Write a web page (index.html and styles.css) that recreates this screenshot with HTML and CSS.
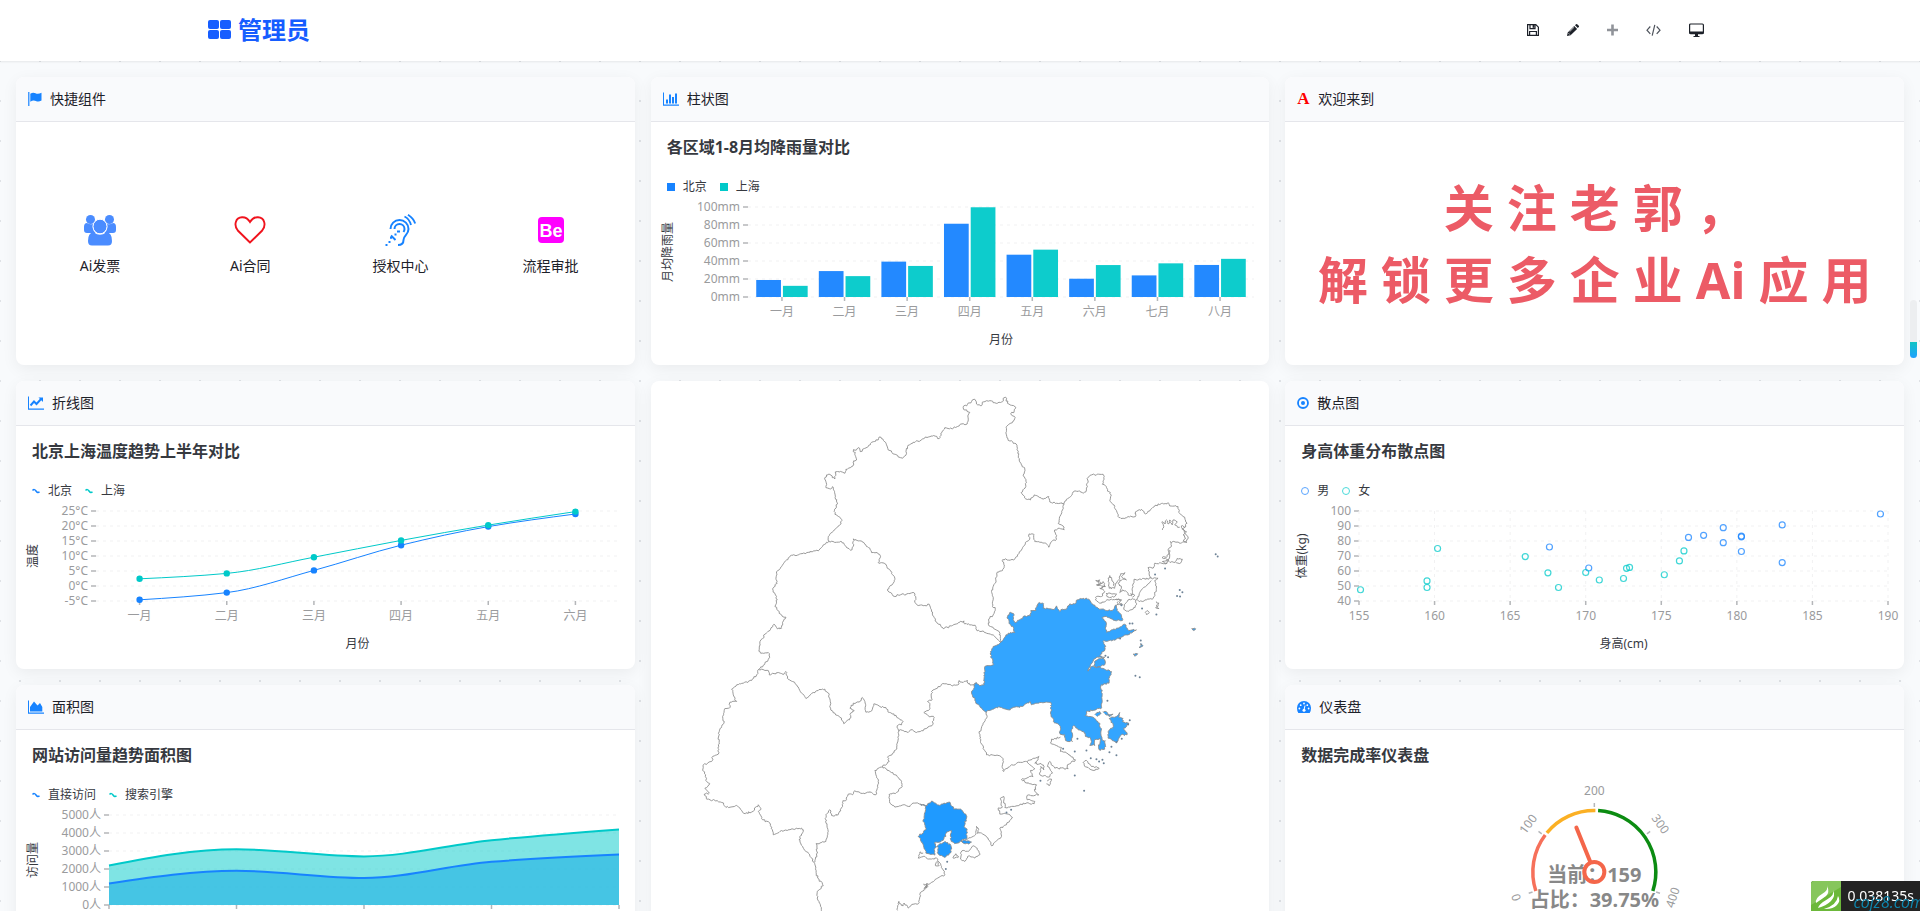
FILE: index.html
```html
<!DOCTYPE html>
<html lang="zh-CN">
<head>
<meta charset="utf-8">
<title>管理员</title>
<link rel="stylesheet" href="styles.css">
</head>
<body>
<header class="topbar">
  <a class="brand" href="#">
    <svg class="brand-icon" viewBox="0 0 24 20" aria-hidden="true"><rect x="0" y="0" width="11" height="9" rx="2"/><rect x="12" y="0" width="11" height="9" rx="2"/><rect x="0" y="10" width="11" height="9" rx="2"/><rect x="12" y="10" width="11" height="9" rx="2"/></svg>
    <span>管理员</span>
  </a>
  <nav class="tools">
    <button class="tool" aria-label="保存"><svg width="12" height="14" viewBox="0 0 12 14"><path d="M.6 1.6h8.2l2.6 2.6v8.2H.6zM3 1.6v4h5v-4M2.6 12.4V8.5h6.8v3.9" fill="none" stroke="#1d2129" stroke-width="1.2"/><rect x="5.6" y="2" width="1.8" height="2.8" fill="#1d2129"/></svg></button>
    <button class="tool" aria-label="编辑"><svg width="12" height="14" viewBox="0 0 12 14"><path d="M0 13l.7-3.6L7.2 3l2.9 2.9-6.500 6.400zM8 2.200l1-1q.6-.5 1.200 0l1.600 1.600q.5.600 0 1.200l-1 1z" fill="#1d2129"/><path d="M1.500 10.200l1.400 1.400M2.600 8.700l4.400-4.400" stroke="#fff" stroke-width=".7"/></svg></button>
    <button class="tool" aria-label="新增"><svg width="11" height="14" viewBox="0 0 11 14"><path d="M5.500 1.500v11M0 7h11" stroke="#909399" stroke-width="2.600"/></svg></button>
    <button class="tool" aria-label="代码"><svg width="15" height="14" viewBox="0 0 15 14"><path d="M4.300 3.500L1 7.200l3.300 3.700M10.700 3.500L14 7.200l-3.300 3.700M8.800 1.800L6.200 12.600" fill="none" stroke="#4e535c" stroke-width="1.200"/></svg></button>
    <button class="tool" aria-label="预览"><svg width="15" height="14" viewBox="0 0 15 14"><rect x=".6" y="1" width="13.800" height="9.600" rx="1" fill="none" stroke="#1d2129" stroke-width="1.200"/><path d="M.6 8.500h13.800v2.500H.6zM6 11h3v2h1.500v1h-6v-1H6z" fill="#1d2129"/></svg></button>
  </nav>
</header>

<main class="board">
  <section class="card">
    <h2 class="card-head"><svg width="14" height="16" viewBox="0 0 14 16"><path d="M.8 1v14" stroke="#1783ff" stroke-width="1.200"/><path d="M2.300 2.800q2.700-1.800 5.200-.5t6-.5v7.700q-3 1.800-5.600.5t-5.600.7z" fill="#1783ff"/></svg>快捷组件</h2>
    <div class="shortcuts">
      <a class="shortcut" href="#"><svg width="34" height="32" viewBox="0 0 34 32" fill="#4a8cff"><circle cx="7.500" cy="5.500" r="4.500"/><circle cx="26.500" cy="5.500" r="4.500"/><path d="M1 13q0-4 3-4 3 2 6 1-1 6 2.500 9H4q-3 0-3-3zM33 13q0-4-3-4-3 2-6 1 1 6-2.500 9H30q3 0 3-3z"/><ellipse cx="17" cy="12.500" rx="7" ry="7.300" stroke="#fff"/><path d="M5 27q0-9 6-8.500 6 4.500 12 0 6-.5 6 8.500 0 4.500-4 4.500H9q-4 0-4-4.500z"/></svg>Ai发票</a>
      <a class="shortcut" href="#"><svg width="32" height="32" viewBox="0 0 32 32"><path d="M16 28.500L3.800 16.500C-.5 11 1.500 3.500 8 3.200 12 3 14.500 5.500 16 8c1.500-2.500 4-5 8-4.800 6.500.3 8.500 7.800 4.200 13.300z" fill="none" stroke="#f0141e" stroke-width="1.900"/></svg>Ai合同</a>
      <a class="shortcut" href="#"><svg width="32" height="32" viewBox="0 0 32 32" fill="none" stroke="#1783ff" stroke-width="2"><path d="M6.500 15a9 9 0 0 1 18 0c0 6-5 6-5 11 0 3-2 5-5.500 5"/><path d="M10.500 15a5 5 0 0 1 10 0q0 1.500-1 3"/><path d="M20.500 2.500q5 2.500 6.500 8.500M24 .8q5.500 3.500 7.200 8.700" stroke-width="1.900"/><path d="M1.500 31h2M4.500 28h2M7 21.500l4.500 4.500M6 23.800h2M10.500 20.500h2M13 17.500h3" stroke-width="1.900"/></svg>授权中心</a>
      <a class="shortcut" href="#"><svg width="32" height="32" viewBox="0 0 32 32"><rect x="3" y="3" width="26" height="26" rx="4" fill="#f0f"/><text class="be" x="16" y="23" text-anchor="middle">Be</text></svg>流程审批</a>
    </div>
  </section>

  <section class="card">
    <h2 class="card-head"><svg width="16" height="16" viewBox="0 0 16 16" fill="#1783ff"><path d="M0 1.500h1V13.500h15v1.200H0zM3 8.500h2V12.500H3zM6 3.500h2v9H6zM9 6h2v6.500H9zM12 2.500h2v10h-2z"/></svg>柱状图</h2>
    <div class="chart-body">
      <h3 class="chart-title">各区域1-8月均降雨量对比</h3>
      <ul class="legend"><li><svg width="8" height="8"><rect width="8" height="8" fill="#1783ff"/></svg>北京</li><li><svg width="8" height="8"><rect width="8" height="8" fill="#00c9c9"/></svg>上海</li></ul>
      <svg class="plot" id="bar"></svg>
    </div>
  </section>

  <section class="card">
    <h2 class="card-head"><span class="letter-icon" aria-hidden="true">A</span>欢迎来到</h2>
    <div class="welcome"><p>关 注 老 郭 ，<br>解 锁 更 多 企 业 Ai 应 用</p></div>
  </section>

  <section class="card">
    <h2 class="card-head"><svg width="16" height="16" viewBox="0 0 16 16"><path d="M0 1.500h1v12h15v1.200H0z" fill="#1783ff"/><path d="M2.500 10.500l3.500-4 2.500 2.500 5-5.500" fill="none" stroke="#1783ff" stroke-width="1.900"/><path d="M10.500 2.500H15V7z" fill="#1783ff"/></svg>折线图</h2>
    <div class="chart-body">
      <h3 class="chart-title">北京上海温度趋势上半年对比</h3>
      <ul class="legend"><li><svg width="8" height="8"><path d="M.5 3.500Q2.300 1.500 4 4t3.500.8" fill="none" stroke="#1783ff" stroke-width="1.500"/></svg>北京</li><li><svg width="8" height="8"><path d="M.5 3.500Q2.300 1.500 4 4t3.500.8" fill="none" stroke="#00c9c9" stroke-width="1.500"/></svg>上海</li></ul>
      <svg class="plot" id="line"></svg>
    </div>
  </section>

  <section class="card card-tall">
    <svg class="map" id="map" viewBox="0 0 619 592" preserveAspectRatio="xMidYMin meet" role="img" aria-label="地图"></svg>
  </section>

  <section class="card">
    <h2 class="card-head"><svg width="12" height="16" viewBox="0 0 12 16"><circle cx="6" cy="8" r="5" fill="none" stroke="#1783ff" stroke-width="1.800"/><circle cx="6" cy="8" r="2" fill="#1783ff"/></svg>散点图</h2>
    <div class="chart-body">
      <h3 class="chart-title">身高体重分布散点图</h3>
      <ul class="legend"><li><svg width="8" height="8"><circle cx="4" cy="4" r="3.500" fill="none" stroke="#5aa5ff"/></svg>男</li><li><svg width="8" height="8"><circle cx="4" cy="4" r="3.500" fill="none" stroke="#4cdada"/></svg>女</li></ul>
      <svg class="plot" id="scatter"></svg>
    </div>
  </section>

  <section class="card">
    <h2 class="card-head"><svg width="16" height="16" viewBox="0 0 16 16" fill="#1783ff"><path d="M0 1.500h1v12h15v1.200H0zM2 12.500V8l4-5.500 3.500 4L12 4l2.300 4v4.500z"/></svg>面积图</h2>
    <div class="chart-body">
      <h3 class="chart-title">网站访问量趋势面积图</h3>
      <ul class="legend"><li><svg width="8" height="8"><path d="M.5 3.500Q2.300 1.500 4 4t3.500.8" fill="none" stroke="#1783ff" stroke-width="1.500"/></svg>直接访问</li><li><svg width="8" height="8"><path d="M.5 3.500Q2.300 1.500 4 4t3.500.8" fill="none" stroke="#00c9c9" stroke-width="1.500"/></svg>搜索引擎</li></ul>
      <svg class="plot" id="area"></svg>
    </div>
  </section>

  <section class="card">
    <h2 class="card-head"><svg width="14" height="16" viewBox="0 0 14 16"><path d="M7 2a7 7 0 0 1 7 7.200q0 2.600-1.300 4.800H1.300Q0 11.800 0 9.200A7 7 0 0 1 7 2z" fill="#1783ff"/><g fill="#fff"><circle cx="2.400" cy="9.500" r=".9"/><circle cx="3.700" cy="6.200" r=".9"/><circle cx="7" cy="4.500" r=".9"/><circle cx="10.300" cy="6.200" r=".9"/><circle cx="11.600" cy="9.500" r=".9"/><circle cx="7" cy="11.300" r="1.500"/></g><path d="M7 11l1-4.500" stroke="#fff"/></svg>仪表盘</h2>
    <div class="chart-body">
      <h3 class="chart-title">数据完成率仪表盘</h3>
      <svg class="gauge" id="gauge" viewBox="-100 -105 200 204"></svg>
    </div>
  </section>
</main>

<div class="progress" aria-hidden="true"><div class="progress-fill"></div></div>
<div class="trace">
  <svg class="trace-logo" viewBox="0 0 30 30" aria-hidden="true"><rect width="30" height="30" fill="#6cb83a"/><path d="M0 0h30v6L0 24z" fill="#86c65c"/><g fill="#fff"><path d="M16 4q2 5-5 9T5 22q6-4 10-7t1-11z"/><path d="M22 9q2 5-6 9.500T7 27q8-2 13-7t2-11z"/><path d="M27 15q-1 9-14 13 9 .5 13-4t1-9z"/></g></svg>
  <span class="trace-time">0.038135s</span>
  <span class="watermark">cojz8.com</span>
</div>
<script src="charts.js"></script>
</body>
</html>
```
FILE: styles.css
```css
* { box-sizing: border-box; }

body {
  margin: 0;
  height: 100vh;
  overflow: hidden;
  display: flex;
  flex-direction: column;
  font: 14px/20px "Noto Sans", "Noto Sans CJK SC", sans-serif;
  color: #1d2129;
  background: #f8fafc;
}

h2, h3, p, ul { margin: 0; padding: 0; font: inherit; }
a { color: inherit; text-decoration: none; }

.topbar {
  flex: none;
  height: 61px;
  padding: 0 216px 2px 208px;
  display: flex;
  align-items: center;
  justify-content: space-between;
  background: #fff;
  box-shadow: 0 1px 2px rgba(0, 0, 0, 0.08);
  position: relative;
}
.brand {
  display: flex;
  align-items: center;
  gap: 6px;
  font-size: 24px;
  line-height: 32px;
  font-weight: 700;
  color: #165dff;
}
.brand-icon { width: 24px; height: 20px; fill: #165dff; }
.tools { display: flex; align-items: center; gap: 28px; }
.tool { display: flex; padding: 0; border: 0; background: none; cursor: pointer; }

.board {
  flex: 1;
  min-height: 0;
  overflow: auto;
  scrollbar-width: none;
  padding: 16px;
  display: grid;
  grid-template-columns: repeat(3, minmax(0, 1fr));
  grid-auto-rows: 288px;
  gap: 16px;
  background-color: #f8fafc;
  background-image:
    radial-gradient(circle, #dfe2e6 1px, transparent 1px),
    radial-gradient(circle, #dfe2e6 1px, transparent 1px);
  background-size: 40px 40px;
  background-position: -20px -20px, 0 0;
}

.card {
  display: flex;
  flex-direction: column;
  background: #fff;
  border-radius: 8px;
  box-shadow: 0 4px 16px rgba(0, 0, 0, 0.06);
  overflow: hidden;
}
.card-tall { grid-row: span 2; }
.card-head {
  flex: none;
  height: 45px;
  padding: 0 12px;
  display: flex;
  align-items: center;
  gap: 8px;
  background: #f9fafc;
  border-bottom: 1px solid #e5e6eb;
}
.letter-icon {
  width: 13px;
  font: 700 17px/20px "Liberation Serif", serif;
  color: #f00;
}

.shortcuts {
  flex: 1;
  padding: 2px 9px 0;
  display: grid;
  grid-template-columns: repeat(4, 1fr);
  align-items: center;
}
.shortcut {
  display: flex;
  flex-direction: column;
  align-items: center;
  gap: 10px;
}
.be { font: 700 18px "Liberation Sans", sans-serif; fill: #fff; }

.welcome {
  flex: 1;
  display: flex;
  align-items: center;
  justify-content: center;
  text-align: center;
  white-space: nowrap;
  font-size: 50px;
  line-height: 72px;
  font-weight: 700;
  color: #ec5b66;
}

.chart-body { flex: 1; display: flex; flex-direction: column; padding-top: 13px; }
.chart-title {
  padding: 0 16px;
  font-size: 16px;
  line-height: 24px;
  font-weight: 700;
  color: #36393f;
}
.legend {
  list-style: none;
  padding: 18px 16px 0;
  display: flex;
  gap: 13px;
  font-size: 12px;
  line-height: 20px;
  color: #36393f;
}
.legend li { display: flex; align-items: center; gap: 8px; }
.plot { display: block; width: 100%; height: 168px; }
.gauge { display: block; width: 100%; height: 204px; }
.map { display: block; width: 100%; height: 100%; }

.tick-label { font-size: 12px; fill: #9a9b9d; }
.axis-title { font-size: 12px; fill: #36393f; }
.gauge-text { font-size: 20px; font-weight: 700; fill: #888; }

.progress {
  position: fixed;
  right: 3px;
  top: 300px;
  width: 7px;
  height: 58px;
  border-radius: 4px;
  background: #eceef0;
  display: flex;
  align-items: flex-end;
  overflow: hidden;
}
.progress-fill {
  width: 100%;
  height: 28%;
  background: linear-gradient(#10c4c4, #1ea0ff);
}

.trace {
  position: fixed;
  right: 0;
  bottom: 0;
  height: 30px;
  display: flex;
  background: #232323;
  color: #fff;
  border-top-left-radius: 3px;
  overflow: hidden;
}
.trace-logo { width: 30px; height: 30px; }
.trace-time { padding: 0 6px; line-height: 30px; }
.watermark {
  position: absolute;
  right: -4px;
  bottom: -1px;
  font: italic 16px/20px "Open Sans", sans-serif;
  color: #0e86ae;
}
```
FILE: charts.js
```js
const BLUE = '#1783ff', TEAL = '#00c9c9';

const line = (x1, y1, x2, y2, s) => `<line x1="${x1}" y1="${y1}" x2="${x2}" y2="${y2}" ${s}/>`;
const text = (x, y, t, anchor, cls = 'tick-label', extra = '') =>
  `<text x="${x}" y="${y}" text-anchor="${anchor}" dominant-baseline="central" class="${cls}" ${extra}>${t}</text>`;
const TICK = 'stroke="#b4b6b9" stroke-width="1.5"';
const GRID = 'stroke="#f1f1f2" stroke-dasharray="3 4"';
const TOP = 10, BOTTOM = 100, LABEL = 114;

function frame(W, left, ticks, yTitle, xTitle) {
  const right = W - 16;
  let s = '';
  ticks.forEach((t, i) => {
    const y = BOTTOM - (BOTTOM - TOP) * i / (ticks.length - 1);
    s += line(left, y, right, y, GRID) + line(left - 5, y, left, y, TICK) + text(left - 8, y - 1, t, 'end');
  });
  s += text((left + right) / 2, 142, xTitle, 'middle', 'axis-title');
  s += text(0, 0, yTitle, 'middle', 'axis-title', 'transform="translate(16 55) rotate(-90)"');
  return s;
}

// Monotone cubic interpolation through the points.
function smooth(p) {
  const n = p.length, d = [], m = [];
  for (let i = 0; i < n - 1; i++) d.push((p[i + 1][1] - p[i][1]) / (p[i + 1][0] - p[i][0]));
  for (let i = 1; i < n - 1; i++) m[i] = d[i - 1] * d[i] <= 0 ? 0 : 2 * d[i - 1] * d[i] / (d[i - 1] + d[i]);
  m[0] = (3 * d[0] - m[1]) / 2;
  m[n - 1] = (3 * d[n - 2] - m[n - 2]) / 2;
  let s = `M${p[0]}`;
  for (let i = 0; i < n - 1; i++) {
    const h = (p[i + 1][0] - p[i][0]) / 3;
    s += `C${p[i][0] + h},${p[i][1] + m[i] * h} ${p[i + 1][0] - h},${p[i + 1][1] - m[i + 1] * h} ${p[i + 1]}`;
  }
  return s;
}

const months = ['一月', '二月', '三月', '四月', '五月', '六月', '七月', '八月'];

function drawBar(el) {
  const W = el.clientWidth, left = 97, right = W - 16;
  const a = [18.9, 28.8, 39.3, 81.4, 47, 20.3, 24, 35.6];
  const b = [12.4, 23.2, 34.5, 99.7, 52.6, 35.5, 37.4, 42.4];
  let s = frame(W, left, ['0mm', '20mm', '40mm', '60mm', '80mm', '100mm'], '月均降雨量', '月份');
  const step = (right - left) / 8.085, x0 = (left + right) / 2 - step * 3.5, bw = step * 0.395;
  months.forEach((m, i) => {
    const x = x0 + step * i;
    s += line(x, BOTTOM, x, BOTTOM + 4, TICK) + text(x, LABEL, m, 'middle');
    s += `<rect x="${x - 1 - bw}" y="${BOTTOM - a[i] * 0.9}" width="${bw}" height="${a[i] * 0.9}" fill="${BLUE}" opacity=".95"/>`;
    s += `<rect x="${x + 1}" y="${BOTTOM - b[i] * 0.9}" width="${bw}" height="${b[i] * 0.9}" fill="${TEAL}" opacity=".95"/>`;
  });
  el.innerHTML = s;
}

function drawLine(el) {
  const W = el.clientWidth, left = 80, right = W - 16, step = (right - left) / 6;
  let s = frame(W, left, ['-5°C', '0°C', '5°C', '10°C', '15°C', '20°C', '25°C'], '温度', '月份');
  const series = [[BLUE, [-4.6, -2.2, 5.2, 13.6, 19.8, 24]], [TEAL, [2.4, 4.2, 9.6, 15.2, 20.3, 24.8]]];
  for (let i = 0; i < 6; i++) {
    const x = left + step * (i + 0.5);
    s += line(x, BOTTOM, x, BOTTOM + 4, TICK) + text(x, LABEL, months[i], 'middle');
  }
  series.forEach(([c, v]) => {
    const p = v.map((t, i) => [left + step * (i + 0.5), BOTTOM - (t + 5) * 3]);
    s += `<path d="${smooth(p)}" fill="none" stroke="${c}"/>`;
    p.forEach(q => { s += `<circle cx="${q[0]}" cy="${q[1]}" r="3.2" fill="${c}"/>`; });
  });
  el.innerHTML = s;
}

function drawScatter(el) {
  const W = el.clientWidth, left = 74, right = W - 16;
  let s = frame(W, left, [40, 50, 60, 70, 80, 90, 100], '体重(kg)', '身高(cm)');
  const X = v => left + (v - 155) * (right - left) / 35;
  for (let v = 155; v <= 190; v += 5) {
    s += line(X(v), TOP, X(v), BOTTOM, GRID) + line(X(v), BOTTOM, X(v), BOTTOM + 4, TICK) + text(X(v), LABEL, v, 'middle');
  }
  const men = [[167.6, 76], [170.2, 62], [176.8, 82.4], [177.8, 83.8], [179.1, 88.9], [179.1, 78.9], [180.3, 83.2], [180.3, 82.8], [180.3, 73], [183, 90.7], [183, 65.6], [189.5, 98]];
  const women = [[155.1, 47.5], [159.5, 53.4], [159.5, 49], [160.2, 75], [166, 69.6], [167.5, 58.8], [168.2, 49], [170, 59], [170.9, 54], [172.5, 55], [172.7, 61.8], [172.9, 62.4], [175.2, 57.5], [176.2, 66.7], [176.5, 73.4]];
  [[BLUE, men], [TEAL, women]].forEach(([c, pts]) => pts.forEach(p => {
    s += `<circle cx="${X(p[0])}" cy="${BOTTOM - (p[1] - 40) * 1.5}" r="3" fill="none" stroke="${c}" stroke-width="1.200" opacity=".75"/>`;
  }));
  el.innerHTML = s;
}

function drawArea(el) {
  const W = el.clientWidth, left = 93, right = W - 16, step = (right - left) / 4;
  let s = frame(W, left, ['0人', '1000人', '2000人', '3000人', '4000人', '5000人'], '访问量', '月份');
  const series = [[BLUE, [1200, 1900, 1500, 2400, 2800]], [TEAL, [2200, 3100, 2700, 3600, 4200]]];
  const paths = series.map(([c, v]) => [c, smooth(v.map((t, i) => [left + step * i, BOTTOM - t * 0.018]))]);
  paths.forEach(([c, d]) => { s += `<path d="${d}V${BOTTOM}H${left}Z" fill="${c}" opacity=".5"/>`; });
  paths.forEach(([c, d]) => { s += `<path d="${d}" fill="none" stroke="${c}" stroke-width="2"/>`; });
  for (let i = 0; i < 5; i++) {
    const x = left + step * i;
    s += line(x, BOTTOM, x, BOTTOM + 4, TICK) + text(x, LABEL + 1, months[i], 'middle');
  }
  el.innerHTML = s;
}

function drawGauge(el) {
  const P = (r, a) => [r * Math.cos(a * Math.PI / 180), -r * Math.sin(a * Math.PI / 180)];
  const arc = (a, b, c) => `<path d="M${P(61.500, a)}A61.500,61.500 0 0 1 ${P(61.500, b)}" fill="none" stroke="${c}" stroke-width="3.500"/>`;
  let s = arc(198, 143, '#f6705a') + arc(140.500, 89, '#fbb024') + arc(86.500, -18, '#0c8c12');
  [0, 100, 200, 300, 400].forEach((v, i) => {
    const a = 198 - 54 * i, [x, y] = P(82, a);
    const rot = [72, -54, 0, 54, -72][i];
    s += line(...P(65, a), ...P(69, a), TICK);
    s += text(0, 0, v, 'middle', 'tick-label', `transform="translate(${x} ${y}) rotate(${rot})"`);
  });
  s += text(0, 2, '当前：159', 'middle', 'gauge-text') + text(0, 27, '占比：39.75%', 'middle', 'gauge-text');
  s += line(...P(11, 112), ...P(48, 112), 'stroke="#f4664a" stroke-width="4" stroke-linecap="round"');
  s += '<circle r="10" fill="none" stroke="#f4664a" stroke-width="4"/>';
  el.innerHTML = s;
}

// Outlines on four overlapping sheets: [sheet, fill, points]; each sheet has its own origin, three units to a pixel.
const SHEETS = { A: [-11, -11], B: [289, -11], C: [39, 259], D: [289, 199] };
const MAIN = '#33a5ff', SOUTH = '#1f9aff';
const REGIONS = [
  ['A', '', '568,514 565,500 572,490 583,480 597,468 606,452 598,440 585,433 584,418 593,402 587,388 584,365 578,350 572,357 558,353 558,335 554,327 560,315 570,313 577,323 585,327 586,306 600,306 615,310 618,298 632,293 642,282 642,272 650,270 646,247 640,245 642,238 650,240 655,233 661,245 668,238 685,230 695,217 707,214 718,201 725,206 737,217 745,240 765,253 788,265 800,250 803,230 820,217 845,210 855,204 870,200 888,199 898,206 903,190 910,182 915,173 940,175 960,164 982,162 985,135 990,127 975,120 970,113 983,103 995,95 1005,88 1010,102 1025,107 1028,96 1050,92 1060,98 1072,100 1088,95 1090,85 1098,82 1103,100 1115,106 1128,112 1122,128 1113,131 1126,142 1120,153 1108,162 1099,172 1101,200 1110,213 1125,220 1133,235 1138,270 1147,290 1155,297 1150,315 1158,328 1158,350 1144,368 1158,387 1172,390 1183,375 1200,383 1212,387 1227,380 1230,396 1250,400 1273,402'],
  ['B', '', '373,402 380,388 395,377 400,366 418,362 430,370 440,360 445,322 455,315 490,313 492,323 488,343 500,350 503,360 512,368 512,395 525,410 535,440 550,445 565,440 587,440 588,425 605,418 618,432 640,412 655,402 672,402 685,398 690,408 715,410 720,430 730,440 742,460 738,470 725,468 735,490 745,500 740,515 722,520 692,515 695,525 685,540 690,555 682,580 645,580 640,595 625,593 628,612 635,625 590,630 583,628 580,650 575,678 565,675 560,665 548,660 540,668 545,655 535,640 548,628 560,630 545,620 555,608 542,612 540,625 530,640 525,655 508,655 505,635 510,617 520,635 522,648'],
  ['B', '', '720,472 705,465 712,455 700,450 697,465 690,450 685,462 680,450 676,462 668,455 672,470 668,480'],
  ['B', '', '738,470 728,478 740,485 730,495 738,505 730,512 742,518'],
  ['B', '', '682,580 668,575 685,570 667,563 682,560 690,540'],
  ['B', '', '690,575 705,578 712,566 728,568 722,580 708,578'],
  ['B', '', '500,670 530,672 525,680 510,683 500,678 500,670'],
  ['B', '', '545,690 530,688 505,690 480,700 467,690 470,680 485,680 495,665 480,655 495,650 470,645 485,640 468,632 480,630 474,648 490,635 497,650 485,655'],
  ['B', '', '555,720 553,705 565,690 585,688 590,700 580,718 565,725 555,720'],
  ['B', '', '635,625 655,625 645,632 650,655 645,672 640,685 620,690 600,695 590,690 605,660 635,632'],
  ['B', '', '530,688 545,690 538,698 548,705 532,704 536,694'],
  ['B', '', '650,695 658,700 652,712 658,716 648,714 652,704'],
  ['B', '', '617,728 622,722 629,728 620,734 617,728'],
  ['B', '', '573,670 585,676 578,682'],
  ['B', '', '373,402 368,420 360,440 355,460 370,468 373,480 355,475 345,480 350,508 335,515 327,532 318,520 300,517 285,515 283,495 268,492 268,510 250,530 238,550 222,570 205,570 190,568 188,575 193,590 188,602 172,607 168,630 160,650 155,665 160,690 158,710 166,713 160,735 150,745 146,765 165,778 178,785 182,800 185,820'],
  ['A', '', '568,514 590,517 605,515 615,527 632,541 640,530 640,507 655,513 672,518 680,530 690,535 695,548 712,548 722,560 715,578 735,582 750,600 765,625 760,640 743,658 765,680 775,675 800,672 822,668 828,685 825,698 835,707 855,707 868,703 875,725 882,740 892,760 912,777 935,768 960,757 972,753 975,762 995,765 1008,770 1012,783 1030,783 1040,790 1060,795 1070,805 1085,820'],
  ['A', '', '568,514 550,525 535,543 520,543 500,548 475,555 455,556 440,570 425,590 410,605 408,625 412,640 398,657 405,672 412,690 405,710 418,725 425,735 438,742 428,760 425,775 412,777 402,763 392,778 375,793 360,815 358,838'],
  ['C', '', '208,28 212,40 235,38 240,52 225,70 207,88 200,105 185,122 160,130 140,135 125,148 130,165 140,185 120,187 118,205 103,210 98,230 103,245 88,275 85,315 85,343 68,350 65,365 40,375 38,392 47,405 50,425 60,432 45,445 58,460 43,463 50,478 75,482 95,488 108,503 140,497 150,505 160,520 185,517 205,495 213,507 205,515 218,540 240,550 250,585 270,575 300,570 335,565 340,575 327,600 340,625 355,640 372,667 378,685 383,715 400,738 382,755 382,775 392,800 394,830'],
  ['C', '', '207,88 235,92 238,105 265,98 282,103 288,95 292,115 320,135 335,160 348,176 370,158 385,152 405,148 418,165 422,205 435,220 455,235 462,252 480,235 482,220 493,213 480,205 490,190 508,187 517,173 525,185 528,217 542,215 552,192 570,200 588,203 595,217 612,222 625,235 638,243 635,255 622,258 625,270'],
  ['C', '', '625,270 640,272 655,278 662,270 680,278 712,265 728,255 733,233 715,228 702,218 718,210 720,195 713,185 727,178 725,155 745,140 765,132 785,137 808,132 808,122 820,128 833,122 835,132 850,135 860,128'],
  ['C', '', '628,272 622,310 618,330 600,347 593,352 598,365 578,380 555,392 560,410 565,425 558,465 545,458 520,460 492,455 488,465 475,463 470,480 460,482 458,500 445,525 425,527 420,510 408,525 407,545 415,575 408,605 378,612 383,640 375,667'],
  ['C', '', '578,380 600,395 615,405 632,420 637,440 620,458 597,465 600,490 615,502 640,495 655,500 675,490 692,493'],
  ['C', SOUTH, '692,493 708,500 700,540 708,570 685,590 700,615 708,640 735,646 733,630 740,622 733,610 755,603 768,590 770,577 785,573 783,600 795,612 815,605 818,598 828,600 832,570 823,560 830,528 812,508 792,508 780,487 762,490 750,497 735,490 725,484 718,490 712,497 692,493'],
  ['C', SOUTH, '743,618 765,605 783,617 784,635 765,653 745,643 743,618'],
  ['C', SOUTH, '815,602 835,603 845,607 835,613 820,610 815,602'],
  ['C', '', '700,640 690,637 685,655 700,650 715,658 740,655 755,680 765,705 740,717 710,738 690,765 688,788 660,800 655,805 643,790 640,798 627,785 623,812'],
  ['C', '', '737,678 742,665 748,678 737,678'],
  ['C', '', '702,732 715,740 704,745 712,730 706,748'],
  ['C', '', '812,640 820,632 835,635 850,618 862,625 870,645 855,655 838,648 825,665 812,658 815,645 812,640'],
  ['C', '', '790,655 798,642 806,652 790,655'],
  ['D', '', '80,780 107,765 110,740 115,745 112,760 125,760 145,775 155,798 185,770 180,745 200,735 218,713 205,703 180,703 175,685 187,683 185,665 182,655 192,650 195,683 235,678 250,670 283,672 285,665 262,660 262,647 297,645 285,635 290,615 270,612 245,600 280,590 272,572 285,567 262,547'],
  ['D', '', '140,397 142,410 130,430 118,460 122,485 140,525 180,528 190,537 187,560 192,575 215,555 260,545 280,535 298,530 295,540 285,550 310,555 312,570 303,560 300,585 325,592 338,580 323,560 330,545 345,565 385,567 383,555 407,540 385,522 362,515 365,503 332,490 335,478 362,472'],
  ['D', MAIN, '137,397 165,385 180,382 205,390 225,382 248,380 270,365 275,375 300,368 333,368 335,380 332,400 345,430 358,435 362,445 360,460 375,465 378,483 398,485 395,450 402,437 415,450 432,455 437,470 450,472 455,485 450,497 465,497 465,480 480,475 478,510 495,508 497,483 487,478 480,430 460,412 437,407 440,395 470,388 483,387 487,350 484,315 508,310 507,297 515,275 495,268 472,262 495,255 495,240 480,228 490,215 498,200 490,185 520,180 545,172 570,163 590,150 567,152 555,133 530,145 500,157 498,125 487,113 500,110 525,122 548,122 545,105 535,95 530,75 520,90 500,92 480,88 460,75 447,58 430,55 412,60 405,72 390,72 380,88 368,88 360,95 350,78 345,87 310,85 312,72 298,68 290,78 288,92 273,92 272,108 250,110 228,128 220,120 222,103 212,97 203,110 207,130 222,145 225,158 205,160 195,172 183,187 160,200 152,215 155,235 160,255 135,260 133,315 120,318 108,308 95,340 107,365 120,380 137,397'],
  ['D', MAIN, '508,415 530,410 540,398 537,412 550,415 548,425 568,432 552,445 562,465 545,465 530,488 505,475 505,455 518,445 520,432 508,415'],
  ['D', '#fff', '445,274 452,256 462,238 475,232 495,232 480,236 468,242 462,256 470,263 455,260 445,274'],
  ['D', MAIN, '490,395 500,396 508,405 520,403 508,410 495,402'],
  ['D', MAIN, '465,404 480,395 484,400 472,410'],
  ['D', '', '430,548 440,542 455,560 478,565 460,572 435,560 430,548'],
  ['D', '', '322,602 335,598 328,618 320,612'],
  ['D', MAIN, '580,222 594,222 585,229 580,222'],
  ['D', MAIN, '603,190 610,198 598,203 606,192'],
  ['D', MAIN, '757,145 768,147 762,152 757,145'],
];
const ISLETS = '603,182 570,131 578,131 587,288 600,292 503,363 570,421 565,434 546,477 530,487 515,501 509,517 530,526 440,512 405,515 413,477 370,507 453,535 470,538 478,545 488,540 492,550 405,587 433,633 302,603 607,86 650,104 545,76 720,30 728,37 712,48 721,50 541,176 497,228 505,232 214,690 200,698 22,846 18,868 828,-77 834,-70 676,-34 646,-16';

// Splits long edges and nudges the new points, so that borders look surveyed.
function roughen(points) {
  let seed = 7;
  const rnd = () => (seed = (seed * 16807) % 2147483647) / 2147483647 - 0.5;
  const p = points.split(' ').map(q => q.split(',').map(Number));
  const out = [p[0]];
  for (let i = 1; i < p.length; i++) {
    const [ax, ay] = p[i - 1], [bx, by] = p[i];
    const n = Math.ceil(Math.hypot(bx - ax, by - ay) / 5);
    for (let k = 1; k < n; k++) out.push([ax + (bx - ax) * k / n + rnd() * 5, ay + (by - ay) * k / n + rnd() * 5]);
    out.push(p[i]);
  }
  return out.map(q => q.map(v => v.toFixed(1)).join(',')).join(' ');
}

function drawMap(el) {
  let s = '';
  REGIONS.forEach(([sheet, fill, pts]) => {
    const [x, y] = SHEETS[sheet];
    s += `<polyline transform="translate(${x} ${y}) scale(.33333)" points="${roughen(pts)}" fill="${fill || 'none'}" stroke="#8a8a8a" stroke-width="2.600"/>`;
  });
  ISLETS.split(' ').forEach(q => {
    const [x, y] = q.split(',').map(Number);
    s += `<circle cx="${289 + x / 3}" cy="${199 + y / 3}" r="1" fill="#6d8296"/>`;
  });
  el.innerHTML = s;
}

const $ = id => document.getElementById(id);
function drawAll() {
  drawBar($('bar'));
  drawLine($('line'));
  drawScatter($('scatter'));
  drawArea($('area'));
}
drawGauge($('gauge'));
drawMap($('map'));
drawAll();
window.addEventListener('resize', drawAll);
```
